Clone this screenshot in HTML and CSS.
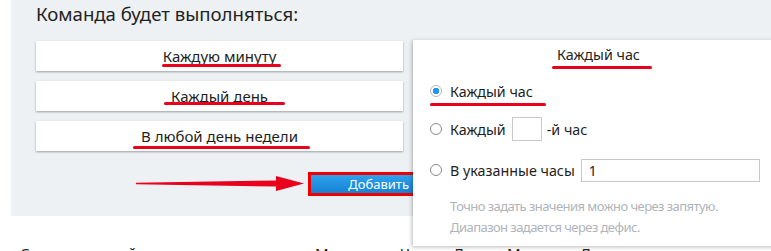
FILE: index.html
```html
<!DOCTYPE html>
<html lang="ru">
<head>
  <meta charset="UTF-8">
  <title>Расписание команды</title>
  <link rel="stylesheet" href="styles.css">
</head>
<body>
  <div class="schedule">
    <h2 class="title">Команда будет выполняться:</h2>

    <div class="choices">
      <div class="choice"><span class="mark mark-1">Каждую минуту</span></div>
      <div class="choice"><span class="mark mark-2">Каждый день</span></div>
      <div class="choice"><span class="mark mark-3">В любой день недели</span></div>
    </div>

    <div class="actions">
      <svg class="arrow" width="170" height="20" viewBox="0 0 170 20">
        <polygon points="0,8.8 140,6.5 140,2 168,9.5 140,17 140,12.5 0,10.2" fill="#e8001c"/>
      </svg>
      <button class="add">Добавить</button>
    </div>

    <div class="popup">
      <div class="popup-title"><span class="mark mark-4">Каждый час</span></div>

      <label class="row row-1">
        <span class="radio checked"></span>
        <span class="mark mark-5">Каждый час</span>
      </label>

      <label class="row row-2">
        <span class="radio"></span>
        <span>Каждый</span>
        <input type="text" class="num">
        <span>-й час</span>
      </label>

      <label class="row row-3">
        <span class="radio"></span>
        <span>В указанные часы</span>
        <input type="text" class="hours" value="1">
      </label>

      <p class="hint">Точно задать значения можно через запятую.<br>Диапазон задается через дефис.</p>
    </div>
  </div>

  <div class="table-head">
    <span>Список заданий <span class="sort">&#9650;</span></span>
    <span>Минуты</span>
    <span>Часы</span>
    <span>Дни</span>
    <span>Месяцы</span>
    <span>Дни недели</span>
  </div>
</body>
</html>
```

FILE: styles.css
```css
html {
  overflow: hidden;
}

body {
  margin: 0;
  font-family: "Noto Sans", "DejaVu Sans", sans-serif;
  color: #1e1e1e;
}

.schedule {
  position: relative;
  margin-left: 11px;
  height: 216px;
  padding: 0 25px;
  background-color: #eef1f4;
}

.title {
  margin: 0;
  padding-top: 2px;
  font-size: 18.6px;
  font-weight: normal;
  line-height: 24px;
  color: #222;
}

.choices {
  display: flex;
  flex-direction: column;
  gap: 10px;
  width: 367px;
  margin-top: 15px;
}

.choice {
  height: 30px;
  line-height: 30px;
  font-size: 15px;
  text-align: center;
  background: #fff;
  box-shadow: 0 1px 2px rgba(0, 0, 0, 0.35);
}

/* red marker lines drawn over the screenshot */
.mark {
  position: relative;
}

.mark::after {
  content: "";
  position: absolute;
  height: 3px;
  border-radius: 2px;
  background: #e8001c;
}

.mark-1::after { left: -1px; right: -5px; bottom: -1px; }
.mark-2::after { left: -7px; right: -17px; bottom: 1px; }
.mark-3::after { left: -8px; right: -12px; bottom: -3px; }
.mark-4::after { left: -5px; right: -12px; bottom: -5px; }
.mark-5::after { left: -20px; right: -13px; bottom: -5px; }

.actions {
  display: flex;
  align-items: center;
  justify-content: flex-end;
  width: 377px;
  margin-top: 23px;
}

.arrow {
  display: block;
  margin-right: 5px;
}

.add {
  width: 102px;
  height: 18px;
  padding: 0 4px 0 0;
  border: none;
  outline: 3px solid #ee0000;
  font-family: inherit;
  font-size: 13px;
  line-height: 18px;
  text-align: right;
  color: #fff;
  background: linear-gradient(#2ea2ec, #1682d4);
}

.popup {
  position: absolute;
  left: 402px;
  top: 40px;
  width: 370px;
  height: 206px;
  box-sizing: border-box;
  padding: 5px 0 0 17px;
  font-size: 14.3px;
  background: #fff;
  box-shadow: -1px 1px 4px rgba(0, 0, 0, 0.28);
}

.popup-title {
  line-height: 20px;
  text-align: center;
  padding-right: 16px;
}

.row {
  display: flex;
  align-items: center;
  height: 24px;
}

.row-1 { margin-top: 14px; }
.row-2 { margin-top: 14px; }
.row-3 { margin-top: 17px; }

.radio {
  box-sizing: border-box;
  width: 12px;
  height: 12px;
  margin-right: 8px;
  border: 1px solid #8a8a8a;
  border-radius: 50%;
  background: #fff;
}

.radio.checked {
  border-color: #b8b8b8;
  background: radial-gradient(circle, #2196f3 0, #2196f3 3px, #fff 3.5px);
}

.num,
.hours {
  box-sizing: border-box;
  height: 24px;
  margin: 0 5px 0 6px;
  padding: 0 7px;
  border: 1px solid #c8c8c8;
  font-family: inherit;
  font-size: 14px;
  color: #222;
}

.num {
  width: 30px;
}

.hours {
  width: 179px;
  height: 23px;
}

.hint {
  margin: 14px 0 0 20px;
  font-size: 13px;
  letter-spacing: -0.55px;
  line-height: 21px;
  color: #b0b4ba;
}

.table-head {
  display: grid;
  grid-template-columns: 295px 85px 53px 54px 73px auto;
  margin-top: 27px;
  padding-left: 20px;
  font-size: 15px;
  line-height: 20px;
  color: #222;
}

.sort {
  font-size: 11px;
  color: #c8c8c8;
}
```
